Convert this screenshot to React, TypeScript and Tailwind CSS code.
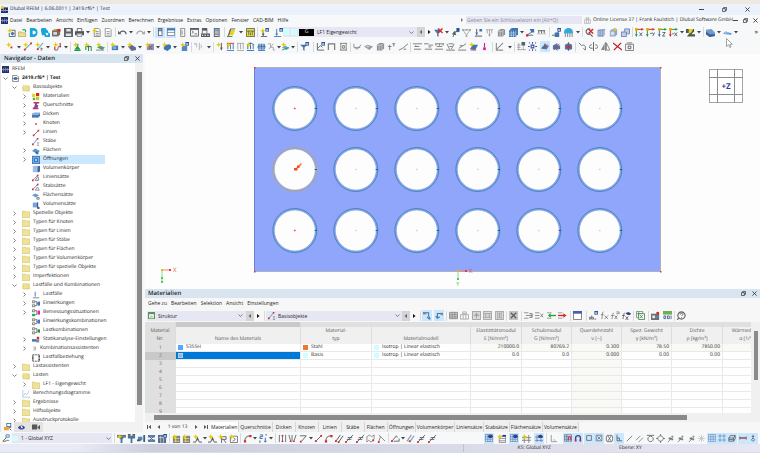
import React from "react";

type Piece = { d: string; fill?: string; stroke?: string; w?: number };

const F = (fill: string, d: string): Piece => ({ fill, d });
const L = (stroke: string, d: string, w = 1): Piece => ({ stroke, d, w });

const BLUE = "#3f74b4";
const SKY = "#7fb0e0";
const INK = "#5a5e64";
const GREY = "#a3a5a8";
const RED = "#d62a2a";
const GREEN = "#1d9a4b";

const star = F("#e6cf00", "M3 0l.9 2.100L6 3l-2.100.9L3 6l-.9-2.100L0 3l2.100-.9z");
const tab = [F("#2f4f9a", "M6 0h4v4H6z"), F("#dfe8f7", "M6.800 1.500h2.400v1.500H6.800z")];
const sheet = (c: string) => [F("#fff", "M2.500 1h5l1 1.500V9.500h-6z"), L(c, "M2.500 .5h5l1.500 1.500v7.500h-6.500zM4 4h3.500M4 6h3.500M4 8h3.500", 0.9)];
const axes = (letter: Piece, a: string, b: string) => [
  L(a, "M1.500 1.500V9", 1.1), L(b, "M1.500 1.500H8.500", 1.1),
  F("#e8b000", "M0 0h3v3H0z"), F(a, "M0 7h3L1.500 10z"), F(b, "M7 0v3l3-1.500z"), letter,
];
const support = (c: string) => [L(c, "M1 2h8M2.500 2v4M5 2v6M7.500 2v4", 1), F(c, "M3.500 7h3L5 10z")];
const zig = (c: string) => [L(c, "M0 2h10M1 8h8M7 5H2l1.500-1.500", 1)];

const ICONS: Record<string, Piece[]> = {
  newModel: [L(INK, "M3.500 2.500h5.500v7h-6.500v-4"), F(BLUE, "M4 6l2-2 2.500 2L6 8.500z"), star],
  open: [F("#e9dda0", "M0 4h4l1 1h4v5H0z"), L("#b9a656", "M.5 4.500h3l1 1h4v4h-8z", 0.7), L(GREEN, "M5 2.500c2-2 4 0 3.500 2", 1.2)],
  cloud: [F("#13a5dd", "M1 0h4a4.500 5 0 0 1 0 10H1z"), F("#fff", "M4 3h1.500a2 2 0 0 1 0 4H4z")],
  cloudSync: [F("#13a5dd", "M0 3a3 3 0 0 1 6-1 2.500 2.500 0 0 1 2 3l2 1v4H4V8H1z"), F("#fff", "M5 5l3 1v2H6z")],
  block: [F("#77726d", "M0 3l3-2h6v6L7 9.500H0z"), F("#dba53a", "M3 1h3l-2 2H1z"), F("#ddd", "M1.500 4.500h4v3h-4z"), F(RED, "M6.500 1h3v3h-3z")],
  save: [F("#5f6164", "M0 0h9l1 1v9H0z"), F("#e4e4e4", "M2.500 1h5v3h-5zM2 6h6v3H2z")],
  print: [F("#515356", "M0 3.500h10V8H0z"), L(INK, "M2.500 3.500v-3h5v3"), F("#ececec", "M2 6h6v4H2z"), L(INK, "M2.500 6.500h5v3h-5z", 0.7)],
  copyDoc: [...sheet("#777"), star],
  doc: sheet("#888"),
  undo: [L(INK, "M2 6c1-4 7-3 7 1", 1.3), F(INK, "M0 3l3.800 4H0z")],
  redo: [L(GREY, "M8 6c-1-4-7-3-7 1", 1.3), F(GREY, "M10 3v4H6.200z")],
  navPanel: [F(INK, "M2.500 0h5.500v10H2.500z"), F("#fff", "M3.500 4h3.500v5H3.500z"), F(SKY, "M3.500 1h3.500v2H3.500z")],
  tablePanel: [F("#fff", "M.5 1h9v8h-9z"), L(INK, "M.5 1h9v8.500h-9zM.5 5.500h9", 0.8), F(BLUE, "M0 .5h10v2.500H0z")],
  panel: [L("#777", "M3 .5h4.500v9H3zM4.500 2.500v5", 0.9)],
  console: [L(INK, "M.5 1h9v8h-9z", 1), L(INK, "M2 3l2 1.500L2 6M5 6.500h3", 0.9), F(INK, "M0 0h10v2H0z")],
  script: [F(INK, "M1 0h6v3H1z"), L(INK, "M1.500 3v3M6.500 3v3", 0.9), F(INK, "M0 6h10v4H0z"), F("#fff", "M1 7.500h1.500v1H1zM4 7.500h1.500v1H4zM7 7.500h1.500v1H7z")],
  calculator: [F("#65676b", "M2 0h6.500v10H2z"), F(SKY, "M3 1h4.500v2H3z"), F("#fff", "M3 4h4.500v1H3zM3 6h4.500v1H3zM3 8h4.500v1H3z")],
  section: [F("#e7d51a", "M2 8l2-6h5L7 8z"), L(INK, "M0 9.500h6M2 8l2-7h5M1 9.500L4 1", 1)],
  yellowGrid: [F("#e7dd3a", "M0 0h10v10H0z"), L(INK, "M.5.5h9v9h-9zM3 3v5M7 3v5M1 3.500h8M5 5v3", 0.9)],
  newCase: [L(INK, "M3.500 3v6M1 9.500h7", 1), F(INK, "M2 6h3L3.500 9z"), star, ...tab],
  caseLoad: [L(BLUE, "M3 1v7M0 9.500h8", 1), F(BLUE, "M1.500 6h3L3 9z"), ...tab],
  filterOff: [F(BLUE, "M0 2h8L5 6v4L3.500 9V6z"), L(RED, "M4.500 .5l5 5M9.500 .5l-5 5", 1.6)],
  nodeBlue: [L(GREEN, "M2 10L5 4h4", 1.1), F(INK, "M1 7l3-4 2 5z"), F("#2f4f9a", "M6 0h3.500v4H6z")],
  filterDots: [L(GREY, "M1 2h8L5 8z", 1), F(GREY, "M0 1h2v2H0zM4 1h2v2H4zM8 1h2v2H8zM4 8h2v2H4z")],
  beamDown: [L(INK, "M1 9h8M3 1v7", 1.1), F(BLUE, "M1.500 5h3L3 8zM6 1h3v3H6z")],
  supportGrey: support(GREY),
  cube: [F("#8d9196", "M1 3l3-2h5v6L6.500 9.500H1z"), L("#e5e6e8", "M1 3.500h5.500V9M6.500 3.500L9 1M3.500 3.500V9", 0.7)],
  meshBlue: [F(BLUE, "M0 3l3-3h7v7L7 10H0z"), L("#dce8f5", "M0 5.500h7M0 8h7M2.500 3v7M5 3v7M7.500 3v6", 0.6)],
  loadRed: [L(INK, "M1 8l6-4M1 8h7", 1), F(RED, "M0 7h2.500v2.500H0z"), F(BLUE, "M4 1h5v4H6z")],
  supportRow: [L(INK, "M1 3h8M2 3v3M5 3v3M8 3v3", 1), F(GREY, "M0 6h3v1H0zM3.500 6h3v1h-3zM7 6h3v1H7z")],
  results: [L(INK, "M0 8h4l4-5", 1), F(BLUE, "M3 5h5v5H3z"), ...tab],
  dome: [F("#35a7d8", "M0 5a5 5 0 0 1 10 0v1H0z"), L(INK, "M1.500 6v4M4 6v4M6.500 6v4M9 6v4", 0.8)],
  findOff: [L(INK, "M6 6.500a3 3 0 1 1 0-5M5 6l3.500 3.500", 1.2), L(RED, "M4 1l5 5M9 1L4 6", 1.6)],
  boxBlue: [F("#aebfe2", "M1 2.500L3 1h6v6.500L7 9.500H1z"), L("#6c80ad", "M1 2.500h5.500V9.500M6.500 2.500L9 1M1 2.500v6.500h6M3.500 3v6", 0.7)],
  boxNew: [F("#8fa5cf", "M1 3l2-1.500h6V7L7 9.500H1z"), F("#d9dfeb", "M2 4h4v4H2z"), F("#e5c629", "M5 0h3v3H5z")],
  boxCopy: [F("#c4cfe6", "M0 4h6v6H0zM4 1h6v5H4z"), L("#5870a5", "M.5 4.500h5.500v5H.5zM4 4V1h5.500v5.500H6", 0.8)],
  axisX: axes(L(INK, "M5 5l3 4M8 5L5 9", 1), GREEN, RED),
  axisY: axes(L(INK, "M4.500 6h2M7 5l1 2M9.500 5L7.500 9", 1), GREEN, RED),
  axisZ: axes(L(INK, "M5 5h3L5 9h3", 1), BLUE, GREEN),
  axisNX: axes(L(INK, "M3.500 6.500h2M6 5l3 4M9 5L6 9", 1), RED, GREEN),
  render: [F("#505a44", "M0 1h9v3L6 7h4v2.500H1l3-4H0z"), F("#e6d321", "M3 1l5 0-2 4-3 1z")],
  solid: [F("#6f9bcf", "M0 2l6-1 4 4v4L4 10 0 7z"), F("#3a6197", "M0 4l4 3h6v2L4 10 0 7z")],
  plate: [F("#5c93cf", "M0 6l3-2 7 2-1 1.500-6-.5z"), F("#9cc2e8", "M1 6l2-2 4 2z")],
  nodeNew: [star, F(RED, "M5 5h2v2H5z")],
  lineNew: [L(INK, "M2 8.500L9 1.500"), F(RED, "M1 7.500h2v2H1zM8 .5h2v2H8z"), star],
  memberNew: [L(SKY, "M3 8L9 1", 1.4), F(RED, "M2 7h2v2H2z"), L(INK, "M7 6v4M6 7.500h3", 0.7), star],
  arcNew: [L(RED, "M2 5v4M8 1v5", 1.3), L(INK, "M2 9h3l1-4h3", 0.9), star],
  supportNew: [F(GREEN, "M5 4l3.500 4.500h-7zM1.500 9h7v1h-7z"), F(INK, "M4 2h2v2H4z"), star],
  hingeNew: [L(GREEN, "M2 9V5h6M5 5v5M8 5v5", 1.2), F(INK, "M4 4h2v2H4z"), star],
  slabNew: [F("#4c9f7d", "M1 6l3-2 6 2-3 3z"), L(INK, "M0 9h9", 0.8), star],
  surfNew: [F(BLUE, "M2 4h7v5H2z"), F(SKY, "M3 5h4v3H3z"), star],
  shellNew: [F("#4c77ab", "M1 5l4-2 5 3v3L5 10z"), L(RED, "M3 4l5 5", 1), star],
  openingNew: [F("#8199bd", "M2 2h8v7H2z"), L(RED, "M4 4l4 4M8 4L4 8", 1), star],
  solidNew: [F(BLUE, "M2 4l6-1.500L10 4v3L6 10 2 8z"), star],
  groupNew: [F("#5687c2", "M2 4h6v6H2z"), ...tab, star],
  ghost: [L("#b5b6b8", "M3 2v4M6 1v8M8 3v4", 1), F("#c9c9cb", "M0 1h3v2H0z")],
  forceNew: [L(INK, "M6 1v8", 1.1), F(INK, "M4.500 6h3L6 9.500z"), star],
  loadA: [L(BLUE, "M1 9.500h8M2 2v6M5 2v6M8 2v6", 1), L(RED, "M1 1.500h8", 1), star],
  loadB: [L(GREY, "M1 9.500h8M2 2v6M5 2v6M8 2v6M1 1.500h8", 1)],
  loadC: [L(BLUE, "M1 9.500h8M2 3v5M5 1v7M8 3v5M1 3l4-2 4 2", 1.1), star],
  loadD: [F("#8fb7dd", "M2 2l6 0 2 3-2 4H2L0 6z"), L(BLUE, "M1 9.500h8M2 2v6M5 2v6M8 2v6", 1), L(INK, "M1 5h8", 0.7)],
  deform: [L(GREY, "M1 2h3v4h3v3h2M2 8l5-6", 1)],
  wizard: [F("#6aa1d8", "M1 6l4-2 4 3-3 2z"), L(GREEN, "M1 9l8-3", 0.9), star],
  filterBox: [F(BLUE, "M0 3h8L5 6v4L3.500 9V6z"), ...tab],
  graph: [L(INK, "M1.500 1v8H9M2 7l3-3 2 2", 1), ...tab],
  frame: [L("#777", "M1.500 9V2h7v7", 1.3)],
  frameFull: [L("#777", "M1 1.500h8M1 9h8M2 2v7M8 2v7M4 4h2v3H4z", 1)],
  vee: [L("#888", "M1 2v4l4 2 4-5M2 6h6", 1)],
  layer: [F("#999b9e", "M0 5l4-2 6 2-4 4z"), F("#d3d4d6", "M2 5l2-1 2 1-1 1z")],
  dim: [L("#777", "M3 3v6M1 5h4M6 2h3M7.500 1v4", 1)],
  slope: [L("#777", "M0 9l4-2 6-5M5 8h3", 1)],
  zigA: zig("#777"),
  zigB: [L("#777", "M0 2h5M5 3.500h5M1 8h8M5 5.500h3", 1)],
  zigC: [L("#777", "M0 2h10M2 5h6M0 8h9M1 2v2M5 2v2M9 2v2", 1)],
  zigD: [L("#777", "M0 9h10M1 2l3 6M9 2L6 8M3 2h5M4 5h3", 1)],
  zigE: [L("#777", "M0 9h9M1 7l8-5M2 4h3", 1)],
  resNew: [F(BLUE, "M1 8l3-5h6L7 9z"), star, L(RED, "M2 9h6", 0.8)],
  pin: [L("#d0208c", "M5 1v5", 1.2), F("#e11aa0", "M3.500 6h3v3h-3z")],
  tools: [L("#8b8d90", "M1.500 1v8H9M2 8l7-7", 1.2)],
  gridSmall: [L(GREY, "M0 3.500h4M0 6h4M0 8.500h10M2 1v8M7 5v4", 1), F(INK, "M5 0h4v4H5z")],
  snapNode: [L("#3b4fa0", "M1 1h1M8 1h1M1 9h1M8 9h1M5 0v2M5 8v2M0 5h2M8 5h2", 1.2), L("#3b4fa0", "M3.500 3.500h3v3h-3z", 1.2)],
  planeXY: [F("#4f77ad", "M0 7l3-4h7L7 8z"), L(RED, "M2 7l6-5", 1), F(INK, "M4 1h2v3H4z")],
  planeXZ: [F("#4f77ad", "M1 4l5-3v3h3v4H6v2L4 8H1z"), L(RED, "M2 9l6-7", 1)],
  planeYZ: [F("#4f77ad", "M1 3l4-2 4 2v5L5 9 1 8z"), F(RED, "M3 4h4v3H3z"), L(INK, "M5 0v10", 0.8)],
  rotA: [L("#777", "M1 1l3 3M4 4c4-2 5 2 4 5M6 7l2 2", 1.1)],
  rotB: [L("#666", "M5 0v10M3 3C-1 4-1 7 4 7M7 3c4 1 4 4 0 4", 1.1)],
  mirror: [F("#85888b", "M4 1v8H0z"), L("#666", "M6 1v8h4zM5 0v10", 0.8)],
  crossRed: [L("#c01f1f", "M0 1l10 8M9 1L1 9", 1.4)],
  settingsBox: [L("#777", "M.5 2.500h9v7h-9zM2 1h6", 1), L("#666", "M3.500 4.500h3v3h-3z", 1.1)],
  member: [L(INK, "M2 8L8 2", 1), F(RED, "M1 7h2v2H1zM7 1h2v2H7z")],
  memberT: [L(SKY, "M1.500 7.500L6.500 1.500", 1.3), F(RED, "M0 7h2v2H0zM6 0h2v2H6z"), L("#777", "M6 6h3M7.500 6v3.500M6 9.500h3", 0.7)],
  material: [F("#e6d81e", "M0 1h4v4H0z"), F(RED, "M5 0h4v4H5z"), F("#52b432", "M1 6h3v3H1z"), F("#c8cf18", "M5 5h4v4H5z")],
  profile: [F("#c32f6b", "M2 0h7v2H6.500L5 7h3v2H1V7h1.500L4 2H2z"), F("#3a5fb4", "M5 3l3 1-1 3H4z")],
  thickness: [F("#86b0dd", "M0 3l3-1h7v4L8 8H0z"), F("#4979b3", "M0 5h8V8H0zM8 5l2-2v3L8 8z")],
  point: [F(RED, "M4 4h2v2H4z")],
  surface: [F("#5b93cf", "M0 5l4-3 6 3-4 3z"), F("#3c6ba5", "M4 6h4v3H5z")],
  opening: [F("#3b78b9", "M0 0h10v10H0z"), F("#75ace2", "M1 1h8v8H1z"), F("#3b78b9", "M2.500 2.500h5v5h-5z"), F("#fff", "M4 4h2v2H4z")],
  solidTree: [F("#9fbce2", "M1 1h7v8H1z"), F("#3c66ab", "M7 2l3-1v7L7 9.500z")],
  lineSet: [L(INK, "M1 8l7-7M4 8l3-4M4 8h4v-4", 0.9), F(RED, "M0 7h2v2H0zM6 1h2v2H6z")],
  memberSet: [L("#5b88c4", "M1 8l7-7", 1.2), L(INK, "M4 9l3-4 2 4z", 0.8), F(RED, "M0 7h2v2H0zM6 1h2v2H6z")],
  surfSet: [F("#6d9ad0", "M0 4l4-2 5 2-4 3z"), L(INK, "M6 7h3v2H6z", 0.9)],
  solidSet: [F("#78a2d7", "M1 2h6v6H1z"), L("#31559a", "M7 2v6h2v1.500H7z", 1.2)],
  folder: [F("#efe29b", "M0 1h4l1 1h5v8H0z"), L("#d3c375", "M.5 1.500h3l1 1h5v7h-9z", 0.6)],
  folderOpen: [F("#f7f0bd", "M1 2h8v7H1z"), F("#ece093", "M1 3l8-1 1 2v5H1L0 5z"), L("#d3c375", "M1.500 1.500h3v1h4v6h-7z", 0.6)],
  loadCase: [L("#4a79c0", "M4 1v6", 1.2), L(INK, "M1 8.500h8", 0.9)],
  action: [L("#555", "M.5 1h3v2.500h-3zM.5 6h3v2.500h-3zM4 2h2v5H4M6 4.500h2", 0.9), F("#3e76c7", "M7 2h3v5H7z")],
  design: [L("#555", "M.5 1h3v2.500h-3zM4 2h2v5H4", 0.9), F("#25b34d", "M0 6h4v3H0z"), F("#e31fc2", "M7 2h3v5H7z")],
  combo: [L("#555", "M.5 1h3v2.500h-3zM.5 6h3v2.500h-3zM4 2h2v5H4", 0.9), F("#1f9440", "M7 3h3v4H7z")],
  analysis: [F("#3f6db6", "M0 4h5v3H0z"), F(RED, "M6 1h3v3H6z"), F("#7d8da7", "M5 4h4v4H5z")],
  assist: [L("#888", "M2 2h5v6H2M4 5h3", 1.2)],
  relation: [L("#444", "M3 1H1v8h2M7 1h2v8H7M2 4l-1.500 1L2 6M8 3h2M8 7h2M4 1h2M4 9h2", 1.1)],
  chart: [L("#a8c2dc", "M1 0v9h9M2 7l2-3 2 2 3-5", 1)],
  rfem: [F("#22306f", "M0 0h10v10H0z"), F("#e8e8f4", "M0 5h10v.8H0zM2 3v5h.6V3zM5 2v6h.6V2zM8 3v5h.6V3z")],
  logo: [F("#22306f", "M0 2h10v8H0z"), F("#efce3a", "M0 0h4v4H0z"), F("#fff", "M0 6h10v.8H0zM3 4v4h.6V4zM6 4v4h.6V4z")],
  modelDoc: [L("#44566b", "M1 .5h6l2 2v7H1z", 1), F("#47719f", "M3 3h4v4H3z"), L(INK, "M0 5h10", 0.9)],
  navData: [F("#3a6bab", "M3 0h6v6H3z"), F("#fff", "M4 1h4v3H4z"), F("#f0a22a", "M0 5h6v4H0z"), L(RED, "M7 7l2 2", 1.2)],
  eye: [F("#34428f", "M0 5c2-4 8-4 10 0-2 4-8 4-10 0z"), F("#fff", "M3.500 4a1.700 1.700 0 1 1 2 2.500z")],
  camera: [F("#55575a", "M0 2h6.500v6H0zM7 5l3-2.500v6L7 6z")],
  csys: [L(RED, "M1 9h4", 1.2), L(GREEN, "M1 9l4-4", 1.2), L(BLUE, "M5 5V1h4v3H5M5 8h4", 1)],
  visA: [F(BLUE, "M2 3h6L6 6v4H4V6z"), F("#6f7882", "M0 1h10v3H0z"), star],
  visB: [F("#4c7299", "M1 2h8v3H6v5H4V5H1z"), F(INK, "M1 0h3v2H1zM6 0h3v2H6z")],
  visC: [F("#4f8ac6", "M1 3h5v4H1z"), F("#485a70", "M7 1h2v8H7zM0 6h4v2H0z")],
  visD: [F("#5885b8", "M1 1h8v3H1zM1 6h8v3H1z"), L(INK, "M2 2l6 6M8 2L2 8", 1)],
  visE: [F("#576f8b", "M0 1h9v9H0z"), L("#dbe7f3", "M1 4h8M3 2v8M6 2v8", 0.7), ...tab],
  gridNew: [F("#85817b", "M1 2h8v8H1z"), L("#f3e98a", "M2 5h6M2 8h6M4 4v5", 0.8), star],
  gridLine: [L("#77736d", "M1.500 2.500h8v7h-8zM5 4l2 2-3 2", 1), star],
  wedge: [L(INK, "M0 9h3l2-5 2 5h3M5 4v3", 1.1), star],
  flagNew: [L(INK, "M4 3v7M4 3h5v3H4M6 6l3 4", 1), star],
  arcRed: [L(INK, "M2 8c0-4 2-6 6-6", 1.1), F(RED, "M1 7h2.500v2.500H1zM7 1h2.500v2.500H7z")],
  numbers: [L(BLUE, "M1 1h3v2H1v2h3M7 4v5M5.500 7.500L7 9l1.500-1.500", 1.1), L(INK, "M7 1h2M1 7v3", 1)],
  bars: [L("#666", "M1.500 1v8M5 1v8M8.500 1v8", 1), F(RED, "M4 1h2v1.500H4zM4 7.500h2V9H4z")],
  vbars: [L("#666", "M1 1l2 7M4.500 1v7M9 1L6.500 8", 1), F(RED, "M2 7.500h2V9H2zM5.500 7.500h2V9h-2z")],
  bend: [L(INK, "M1 2h7L3 8", 1), F(RED, "M1 7.500h2V9.500H1z")],
  hatch: [L(INK, "M1 8l5-7M4 9l5-7", 1.1), F(RED, "M0 7h2v2H0zM3 8h2v2H3z")],
  lineX: [L(INK, "M1 9l8-8M3 4h5M2 6h5", 1), F(RED, "M0 8h2v2H0z")],
  polyGrey: [L("#888", "M1 3l3-2 2 2 3-2v4L6 9 3 7 1 9z", 1), F(RED, "M7 6h2v2H7z")],
  snapEnd: [L("#888", "M2 1l4 4 3 3M4 3L2 8", 1.1), F(RED, "M1 8h2v2H1z")],
  magnetLine: [L(INK, "M1 8l5-6 1 2M3 8h6V5", 1), F(RED, "M0 7h2v2H0z")],
  parallelR: [L("#7e93b3", "M1 8l5-7M4 9l5-7", 1.2), F(RED, "M3 7h2v2H3z")],
  tableEye: [L("#5b77a5", "M.5.5h9v9h-9zM.5 3.500h9M.5 6.500h9M3.500.5v9M6.500.5v9", 0.8), F("#2b3f8a", "M4 2c2-2 5-1 6 1-1 2-4 3-6 1z")],
  tableStar: [L("#777", "M2.500 2.500h7v7h-7zM2.500 5h7M2.500 7.500h7", 0.8), star, F("#2b3f8a", "M6 1h4v2H6z")],
  railNew: [L("#777", "M2.500 1v9M7.500 1v9M0 4h10M0 7h10", 0.9), star],
  railEye: [L("#5b77a5", "M2.500 1v9M7.500 1v9M0 4h10M0 8h10", 0.9), F("#2b3f8a", "M4 2c2-2 5-1 6 1-1 2-4 3-6 1z")],
  corner: [L("#9b9da0", "M2.500 1v7.500H9", 1.1), L("#bbb", "M4.500 6.500h2v2", 0.8)],
  gridMagnet: [L("#4b5c80", "M.5 1h9v8h-9zM.5 3.500h9M.5 6.500h9M3.500 1v8", 0.8), L(RED, "M5.500 8V5a1.500 1.500 0 0 1 3 0v3", 1.3)],
  magnet: [L("#2e4b94", "M2 9V5a3 3 0 0 1 6 0v4", 1.7), F(RED, "M1 7h2v2.500H1zM7 7h2v2.500H7z")],
  sqr: [L("#5e6268", "M2 2h6v6H2z", 1)],
  sqrX: [L("#5e6268", "M1.500 1.500h7v7h-7zM3 3l4 4M7 3L3 7", 0.9)],
  sqrI: [L("#5e6268", "M2 1.500h6M2 8.500h6M3 2l4 6M7 2L3 8M1.500 2v6M8.500 2v6", 0.9)],
  ortho: [L("#51607a", "M2.500 1v7.500H9M2.500 5h3v3", 1.1)],
  diag: [L("#777", "M2 8l6-6", 1)],
  para: [L("#777", "M1 7l5-5M4 9l5-5", 0.9)],
  tangent: [L("#666", "M1 1.500h8", 1), L("#666", "M5 2.500a3 3 0 1 0 .1 0", 1)],
  circle: [L("#666", "M5 2a3 3 0 1 0 .1 0M5 0v2M5 8v2M0 5h2M8 5h2", 0.9)],
  spot: [L("#777", "M2 9l6-6", 0.9), F("#777", "M3 4h3v2H3zM6 5h2v2H6zM6 2h2v1H6z")],
  stars: [L("#b4b4b4", "M2 2l6 6M8 2L2 8M5 1v8M1 5h8", 0.7)],
  grid: [L("#5b83b8", "M.5.5h9v9h-9zM.5 3.500h9M.5 6.500h9M3.500.5v9M6.500.5v9", 0.7)],
  gridOpen: [L("#5b83b8", "M2.500 0v10M7.500 0v10M0 2.500h10M0 7.500h10", 0.8)],
  stack: [L("#4b5057", "M1 5l2-3h6L7 5zM1 5v4h6V5M7 9l2-3V2M1 7h6", 0.9)],
  strap: [L("#a22b3b", "M1 5h8", 1.6), L(INK, "M1 3v4M9 3v4", 1)],
  anchor: [L("#51607a", "M5 1v5M3.500 3h3", 1), L("#51607a", "M5 5.500a1.700 1.700 0 1 0 .1 0", 1)],
  structure: [F("#5d8f6d", "M0 0h10v10H0z"), F("#e9f3e0", "M1.500 3h7v6h-7z"), F("#a9cf8f", "M2 8l3-3 3 3z")],
  pickA: [L(BLUE, "M1 1h6v4l2 4M5 6l3 3", 1.3), F("#7b8794", "M0 0h4v3H0z")],
  pickB: [L(BLUE, "M8 2H3v5M1 5l2 3 3-2", 1.3), F("#7b8794", "M7 1h3v3H7z")],
  sheetGrid: [F("#c9cbcd", "M0 1h10v8H0z"), L("#85878a", "M.5 1.500h9v7h-9zM0 4h10M0 6.500h10M3.500 1v8M6.500 1v8", 0.8)],
  sheetTop: [L("#a1a3a6", "M.5 4h9v5h-9zM3.500 4v5M6.500 4v5M3 1h4v2H3z", 0.9)],
  sheetArrow: [F("#d8d9db", "M0 0h10v10H0z"), L("#999", "M.5.5h9v9h-9zM5 2v6M2 5h6M3 3.500h4", 0.9)],
  sheetRow: [F("#d8d9db", "M0 0h10v10H0z"), L("#999", "M.5.5h9v9h-9zM.5 3h9M.5 7h9M3 3v4M7 3v4", 0.8)],
  sheetCol: [F("#d8d9db", "M0 0h10v10H0z"), L("#999", "M.5.5h9v9h-9zM3 .5v9M7 .5v9M5 2v6M4 3h2M4 7h2", 0.8)],
  del: [F("#c1c3c5", "M0 0h10v10H0z"), L("#5c5e61", "M2 2l6 6M8 2L2 8", 1.4)],
  rowIn: [L("#888", "M0 2h5M0 8h5M2 5h7", 1), L("#666", "M6 3h3v4H6", 1)],
  rowDel: [L("#888", "M0 2h5M0 8h5M0 5h5M6 3l3 4M9 3L6 7", 1)],
  rowGreen: [L("#888", "M0 2h5M0 8h5", 0.9), L("#1fa33c", "M3 5h7", 1.5), F("#1fa33c", "M4 2.500v5L1 5z")],
  rowRed: [L("#888", "M0 2h5M0 8h5", 0.9), L("#e02020", "M0 5h7", 1.5), F("#e02020", "M6 2.500v5L9.500 5z")],
  window: [F("#fff", "M0 0h10v10H0z"), L("#777", "M.5.5h9v9h-9z", 1), F("#4560a9", "M0 0h10v3H0z")],
  abTab: [L(INK, "M0 7h2v2H0zM3 5v4h2V7H3M6 9h2", 0.9), ...tab],
  fx: [L("#777", "M4 1C2 1 3 4 2 9M1 4h3M5 5l4 4M9 5L5 9", 0.9)],
  fxTab: [L("#777", "M3 2C2 2 2 5 1 9M0 5h3M4 5l3 4M7 5L4 9M6 1h3v2H6", 0.9)],
  fxEye: [L("#555", "M3 2C2 2 2 5 1 9M0 5h3M4 6l3 4M7 6l-3 4", 0.9), F("#2b3f8a", "M4 2.500c2-2 5-1 6 .5-1 2-4 2-6-.5z")],
  excel: [L("#5f8f63", "M.5.5h7v7h-7zM.5 3h7M3 .5v7", 0.9), F("#fff", "M3 3h6.500v6.500H3z"), L("#3f7a45", "M3 3h6.500v6.500H3zM4.500 4.500l3 3.500M7.500 4.500L4.500 8", 0.9)],
  modelIn: [F("#6b6e72", "M0 3h9v7H0z"), F("#e9e9ea", "M1.500 5h3v3h-3z"), F("#5084c3", "M5 5h3v3H5z"), F(RED, "M6 1h3v3H6z")],
  decimals: [F("#6fae55", "M0 0h10v4H0z"), L("#38568d", "M1 5.500h2v3H1zM5 5.500h2v3H5zM9 5v4", 0.9)],
  help: [L(INK, "M5 1a4 4 0 1 1-.1 0M2 8L0 10", 1.2), L(INK, "M3.500 4c0-2 3-2 3 0L5 5.500M5 7v.8", 1)],
};

function Icon({ n, s = "size-[10px]" }: { n: string; s?: string }) {
  return (
    <svg viewBox="0 0 10 10" className={`${s} shrink-0`} fill="none" aria-hidden="true">
      {ICONS[n].map((p, i) => (
        <path key={i} d={p.d} fill={p.fill ?? "none"} stroke={p.stroke} strokeWidth={p.w} />
      ))}
    </svg>
  );
}

function Caret() {
  return (
    <svg viewBox="0 0 4 4" className="size-[4px] shrink-0" aria-hidden="true">
      <path d="M0 1h4L2 3.500z" fill="#444" />
    </svg>
  );
}

function Sep() {
  return (
    <span className="flex w-[4px] shrink-0 justify-center">
      <span className="h-[10px] w-px bg-[#d9d9d9]" />
    </span>
  );
}

/* "v" is the drop-down arrow, a leading "*" marks a switched-on tool */
function Tools({ items, className }: { items: string; className: string }) {
  return (
    <div className={`flex shrink-0 items-center justify-between ${className}`}>
      {items.split(" ").map((t, i) => {
        if (t === "v") return <Caret key={i} />;
        const on = t.startsWith("*");
        const name = on ? t.slice(1) : t;
        return (
          <button
            key={i}
            type="button"
            aria-label={name}
            aria-pressed={on}
            className={`flex h-[11px] w-[10px] shrink-0 items-center justify-center ${on ? "bg-[#cce6fb]" : ""}`}
          >
            <Icon n={name} s={on ? "size-[8px]" : "size-[9px]"} />
          </button>
        );
      })}
    </div>
  );
}

function Chevron({ down = true }: { down?: boolean }) {
  return (
    <svg viewBox="0 0 5 5" className="size-[5px] shrink-0" fill="none" stroke="#666" strokeWidth="0.800" aria-hidden="true">
      <path d={down ? "M.5 1.500l2 2 2-2" : "M1.500.5l2 2-2 2"} />
    </svg>
  );
}

function Step({ dir }: { dir: "prev" | "next" }) {
  const prev = dir === "prev";
  return (
    <button
      type="button"
      aria-label={prev ? "Zurück" : "Weiter"}
      className={`flex h-[10px] w-[8px] shrink-0 items-center justify-center ${prev ? "bg-[#d4d4d6]" : ""}`}
    >
      <svg viewBox="0 0 4 4" className="size-[4px]" aria-hidden="true">
        <path d={prev ? "M3 0v4L.5 2z" : "M1 0v4l2.500-2z"} fill={prev ? "#666" : "#111"} />
      </svg>
    </button>
  );
}

function Combo({ label, value, className, children }: { label: string; value: string; className: string; children?: React.ReactNode }) {
  return (
    <label className={`flex h-[10px] shrink-0 items-center bg-[#e6e7f3] ${className}`}>
      {children}
      <select aria-label={label} className="h-[8px] min-w-0 flex-1 appearance-none bg-transparent p-0 leading-[8px]">
        <option>{value}</option>
      </select>
      <Chevron />
    </label>
  );
}

function Restore({ s = "size-[5px]" }: { s?: string }) {
  return (
    <svg viewBox="0 0 6 6" className={s} fill="none" stroke="#333" strokeWidth="0.900" aria-hidden="true">
      <path d="M.5 2h3.500v3.500H.5zM2 2V.5h3.500V4H4" />
    </svg>
  );
}

function Close({ s = "size-[5px]" }: { s?: string }) {
  return (
    <svg viewBox="0 0 6 6" className={s} fill="none" stroke="#333" strokeWidth="1" aria-hidden="true">
      <path d="M.5.5l5 5M5.500.5l-5 5" />
    </svg>
  );
}

function Minimize() {
  return <span className="block h-px w-[5px] bg-[#444]" />;
}

function PanelTitle({ children }: { children: string }) {
  return (
    <div className="flex h-[9px] shrink-0 items-center gap-[6px] bg-[#d8e5f1] pr-[3px] pl-[3px]">
      <h2 className="flex-1 text-[6px] leading-[9px] font-semibold">{children}</h2>
      <button type="button" aria-label="Abdocken"><Restore /></button>
      <button type="button" aria-label="Schließen"><Close /></button>
    </div>
  );
}

type Node = { t: string; i?: string; open?: boolean; arrow?: boolean; on?: boolean; kids?: Node[] };

const leaf = (t: string, i: string, arrow = true, on = false): Node => ({ t, i, arrow, on });
const folder = (t: string): Node => ({ t, i: "folder", arrow: true });

const TREE: Node[] = [
  {
    t: "Basisobjekte", i: "folderOpen", open: true, arrow: true, kids: [
      leaf("Materialien", "material"), leaf("Querschnitte", "profile"), leaf("Dicken", "thickness"),
      leaf("Knoten", "point"), leaf("Linien", "member"), leaf("Stäbe", "memberT", false),
      leaf("Flächen", "surface"), leaf("Öffnungen", "opening", true, true), leaf("Volumenkörper", "solidTree", false),
      leaf("Liniensätze", "lineSet", false), leaf("Stabsätze", "memberSet", false),
      leaf("Flächensätze", "surfSet", false), leaf("Volumensätze", "solidSet", false),
    ],
  },
  folder("Spezielle Objekte"), folder("Typen für Knoten"), folder("Typen für Linien"), folder("Typen für Stäbe"),
  folder("Typen für Flächen"), folder("Typen für Volumenkörper"), folder("Typen für spezielle Objekte"), folder("Imperfektionen"),
  {
    t: "Lastfälle und Kombinationen", i: "folderOpen", open: true, arrow: true, kids: [
      leaf("Lastfälle", "loadCase"), leaf("Einwirkungen", "action"), leaf("Bemessungssituationen", "design"),
      leaf("Einwirkungskombinationen", "action", false), leaf("Lastkombinationen", "combo", false),
      leaf("Statikanalyse-Einstellungen", "analysis"), leaf("Kombinationsassistenten", "assist"),
      leaf("Lastfallbeziehung", "relation", false),
    ],
  },
  folder("Lastassistenten"),
  { t: "Lasten", i: "folderOpen", open: true, arrow: true, kids: [leaf("LF1 - Eigengewicht", "folder")] },
  leaf("Berechnungsdiagramme", "chart", false),
  folder("Ergebnisse"), folder("Hilfsobjekte"), folder("Ausdruckprotokolle"),
];

function TreeRow({ n }: { n: Node }) {
  const small = n.i === "assist";
  return (
    <li>
      <div className="flex h-[9px] items-center">
        <span className="flex w-[10px] shrink-0 items-center">{n.arrow && <Chevron down={!!n.open} />}</span>
        <span className={`flex h-[9px] items-center gap-[3px] whitespace-nowrap ${n.on ? "w-[73px] bg-[#cce8ff]" : ""}`}>
          <Icon n={n.i!} s={small ? "size-[5px]" : "size-[8px]"} />
          <span>{n.t}</span>
        </span>
      </div>
      {n.kids && (
        <ul className="pl-[10px] not-last:pb-px">
          {n.kids.map((k) => <TreeRow key={k.t} n={k} />)}
        </ul>
      )}
    </li>
  );
}

function Navigator() {
  return (
    <aside className="flex w-[143px] shrink-0 flex-col border-l border-[#e4e4e4] bg-[#f2f2f2]">
      <PanelTitle>Navigator - Daten</PanelTitle>
      <div className="flex min-h-0 flex-1">
        <div className="min-w-0 flex-1 overflow-hidden bg-white pt-[2px]">
          <div className="flex h-[9px] items-center gap-[3px] pl-px"><Icon n="rfem" s="size-[7px]" />RFEM</div>
          <div className="flex h-[9px] items-center pl-[2px] font-bold">
            <span className="w-[9px]"><Chevron /></span>
            <Icon n="modelDoc" s="size-[7px]" />
            <span className="pl-[3px]">2419.rf6* | Test</span>
          </div>
          <ul className="pl-[11px]">
            {TREE.map((n) => <TreeRow key={n.t} n={n} />)}
          </ul>
        </div>
        <div className="flex w-[8px] shrink-0 flex-col items-center pt-[9px] pb-[17px]">
          <div className="w-[5px] flex-1 bg-[#8a8a8a]" />
        </div>
      </div>
      <div className="flex h-[10px] shrink-0">
        <button type="button" aria-label="Daten" className="flex w-[13px] items-center justify-center bg-[#f8f8f8]"><Icon n="navData" s="size-[8px]" /></button>
        <button type="button" aria-label="Zeigen" className="flex w-[15px] items-center justify-center bg-[#e3e3e3]"><Icon n="eye" s="size-[7px]" /></button>
        <button type="button" aria-label="Ansichten" className="flex w-[14px] items-center justify-center bg-[#e3e3e3]"><Icon n="camera" s="size-[8px]" /></button>
      </div>
    </aside>
  );
}

function Model() {
  const cols = [0, 1, 2, 3, 4, 5];
  const rows = [0, 1, 2];
  return (
    <svg viewBox="0 1 615 235" className="min-h-0 w-full flex-1 bg-[#fdfdfd]" role="img" aria-label="Platte mit Öffnungen">
      <rect x="109.500" y="14.500" width="406" height="204" fill="#90a6fa" stroke="#b0b1bd" />
      <path d="M109.500 14.500v204" stroke="#6f80c8" />
      {[109, 515].map((x) => [14, 218].map((y) => <rect key={`${x}-${y}`} x={x} y={y} width="1.500" height="1.500" fill="#f02b3c" />))}
      {rows.map((r) =>
        cols.map((c) => {
          const x = 149.800 + c * 61;
          const y = 55.500 + r * 61;
          const picked = r === 1 && c === 0;
          return (
            <g key={`${r}-${c}`}>
              <circle cx={x} cy={y} r="22" fill="#86a5f2" stroke={picked ? "#c2a366" : "#3480b0"} strokeWidth="0.800" />
              <circle cx={x} cy={y} r="20.500" fill="#fdfdfd" stroke={picked ? "#a6aacb" : "#7d90cc"} strokeWidth="0.600" />
              <rect x={x + 19.800} y={y - 0.500} width="2.400" height="1" fill="#1d5f93" />
              {!picked && <rect x={x - 0.700} y={y - 0.700} width="1.400" height="1.400" fill={c === 0 ? "#f02020" : "#c9c9c9"} />}
            </g>
          );
        }),
      )}
      <path d="M150.500 116.500l6-6" stroke="#f5691c" strokeWidth="1.300" />
      <path d="M149 115h3.500v2.500H149zM152 112.500h2.500v2.500H152z" fill="#f5501a" />
      {[[17, 217], [313, 218]].map(([x, y], i) => (
        <g key={i} fontSize="6" fontFamily="Open Sans, sans-serif">
          <path d={`M${x} ${y}h9`} stroke="#f58080" />
          <path d={`M${x} ${y}v${i === 0 ? 12 : 8}`} stroke="#86dd86" />
          <rect x={x - 1} y={y - 1} width="2" height="2" fill="#d0c020" />
          <rect x={x + 7} y={y - 1} width="2" height="2" fill="#e83a3a" />
          <rect x={x - 1} y={y + 7} width="2" height="2" fill="#4cc85a" />
          <text x={x + 11} y={y + 2} fill="#e84545">X</text>
          {i === 0 ? <rect x={x - 1} y={y + 11} width="2" height="2" fill="#4cc85a" /> : <text x={x - 2} y={y + 15} fill="#3fbf50">Y</text>}
        </g>
      ))}
      <g stroke="#8c8c8c" fill="none">
        <rect x="564.500" y="16.500" width="33" height="33" fill="#fff" stroke="#a5a5a5" />
        <path d="M572.500 16v34M589.500 16v34M564 24.500h34M564 41.500h34" />
      </g>
      <text x="581" y="36" textAnchor="middle" fontSize="8" fontWeight="700" fontFamily="Open Sans, sans-serif" fill="#3c3c96">+Z</text>
    </svg>
  );
}

const HEAD = [
  ["Material", "Nr."], ["", "Name des Materials"], ["Material-", "typ"], ["", "Materialmodell"],
  ["Elastizitätsmodul", "E [N/mm²]"], ["Schubmodul", "G [N/mm²]"], ["Querdehnzahl", "ν [--]"],
  ["Spez. Gewicht", "γ [kN/m³]"], ["Dichte", "ρ [kg/m³]"], ["Wärmedehnz.", "α [1/°C]"],
];

const DATA = [
  { name: "S355H", type: "Stahl", color: "bg-[#ec7a34]", nums: ["210000.0", "80769.2", "0.300", "78.50", "7850.00", ""] },
  { name: "", type: "Basis", color: "bg-[#ccffff]", nums: ["0.0", "0.0", "0.000", "0.00", "0.00", ""] },
];

const swatch = "inline-block size-[5px] align-middle";
const cell = "h-[8px] overflow-hidden border-r border-b border-[#e9e9e9] p-0 px-[2px] leading-[7px] whitespace-nowrap";

function MaterialTable() {
  return (
    <table className="w-[629px] table-fixed border-separate border-spacing-0 bg-white">
      <colgroup>
        <col className="w-[31px]" /><col className="w-[125px]" /><col className="w-[71px]" /><col className="w-[99px]" />
        <col className="w-[51px]" /><col className="w-[50px]" /><col className="w-[50px]" /><col className="w-[50px]" />
        <col className="w-[51px]" /><col className="w-[51px]" />
      </colgroup>
      <thead className="text-[#555]">
        <tr>
          {HEAD.map((h, i) => (
            <th key={i} className={`h-[22px] border-r border-[#dcdcdc] p-0 align-top font-normal ${i === 0 ? "bg-[#e0e0e0]" : "bg-[#f0f0f0]"}`}>
              <div className={`h-[5px] ${i === 1 ? "bg-[#c9c9c9]" : "bg-[#e0e0e0]"}`} />
              <div className="h-[8px] leading-[8px] whitespace-nowrap">{h[0]}</div>
              <div className="h-[8px] leading-[8px] whitespace-nowrap">{h[1]}</div>
            </th>
          ))}
        </tr>
      </thead>
      <tbody>
        {[1, 2, 3, 4, 5, 6, 7, 8, 9].map((nr) => {
          const d = DATA[nr - 1];
          return (
            <tr key={nr}>
              <th scope="row" className={`h-[8px] p-0 leading-[8px] font-normal text-[#666] ${nr === 2 ? "bg-[#c9c9c9]" : "bg-[#e0e0e0]"}`}>{nr}</th>
              <td className={`${cell} ${nr === 2 ? "bg-[#0078d7]" : ""}`}>
                {nr === 1 && <span className="flex items-center gap-[3px]"><span className={`${swatch} bg-[#54a8ff]`} />{d.name}</span>}
                {nr === 2 && <span className="flex items-center"><span className={`${swatch} border border-[#b9cee2] bg-[#8fb3d4]`} /></span>}
              </td>
              <td className={cell}>
                {d && <span className="flex items-center gap-[3px]"><span className={`${swatch} ${d.color}`} />{d.type}</span>}
              </td>
              <td className={cell}>
                {d && <span className="flex items-center gap-[3px]"><span className={`${swatch} bg-[#ccffff]`} />Isotrop | Linear elastisch</span>}
              </td>
              {[0, 1, 2, 3, 4, 5].map((k) => (
                <td key={k} className={`${cell} text-right ${k === 2 || nr === 1 ? "bg-[#f9f9f5]" : ""}`}>{d?.nums[k]}</td>
              ))}
            </tr>
          );
        })}
      </tbody>
    </table>
  );
}

const TABS = ["Materialien", "Querschnitte", "Dicken", "Knoten", "Linien", "Stäbe", "Flächen", "Öffnungen", "Volumenkörper", "Liniensätze", "Stabsätze", "Flächensätze", "Volumensätze"];

function Pager({ d, label }: { d: string; label: string }) {
  return (
    <button type="button" aria-label={label} className="flex w-[9px] items-center justify-center">
      <svg viewBox="0 0 5 4" className="h-[4px] w-[5px]" aria-hidden="true"><path d={d} fill="#555" /></svg>
    </button>
  );
}

function Materials() {
  return (
    <section className="flex shrink-0 flex-col bg-[#f7f7f7]">
      <PanelTitle>Materialien</PanelTitle>
      <nav className="flex h-[11px] items-center gap-[4px] pl-[3px]">
        {["Gehe zu", "Bearbeiten", "Selektion", "Ansicht", "Einstellungen"].map((m) => <button key={m} type="button">{m}</button>)}
      </nav>
      <div className="flex h-[13px] items-center pl-[2px]">
        <Combo label="Tabellengruppe" value="Struktur" className="w-[99px] gap-[3px] pr-[3px] pl-px"><Icon n="structure" s="size-[7px]" /></Combo>
        <Step dir="prev" /><Step dir="next" />
        <Sep />
        <Combo label="Objektgruppe" value="Basisobjekte" className="w-[136px] gap-[2px] pr-[2px] pl-[2px]"><Icon n="memberT" s="size-[8px]" /></Combo>
        <Step dir="prev" /><Step dir="next" />
        <Sep />
        <Tools items="*pickA *pickB" className="w-[22px]" />
        <Sep />
        <Tools items="sheetGrid sheetTop sheetArrow sheetRow sheetCol" className="w-[56px]" />
        <Sep />
        <Tools items="del" className="w-[11px]" />
        <Sep />
        <Tools items="rowIn rowDel rowGreen rowRed" className="w-[45px]" />
        <Sep />
        <Tools items="window" className="w-[12px]" />
        <Sep />
        <Tools items="abTab fx fxTab fxEye" className="w-[43px]" />
        <Sep />
        <Tools items="excel" className="w-[11px]" />
        <Sep />
        <Tools items="modelIn decimals" className="w-[22px]" />
        <Sep />
        <Tools items="help" className="w-[10px]" />
      </div>
      <div className="flex h-[91px]">
        <div className="min-w-0 flex-1 overflow-hidden"><MaterialTable /></div>
        <div className="flex w-[9px] shrink-0 flex-col items-center bg-[#f0f0f0] pt-[9px]">
          <div className="h-[49px] w-[4px] bg-[#8a8a8a]" />
        </div>
      </div>
      <div className="flex h-[9px] items-center bg-[#f0f0f0] pl-[9px]">
        <div className="h-[5px] w-[88%] bg-[#8a8a8a]" />
      </div>
      <div className="flex h-[10px] items-stretch">
        <Pager label="Erste" d="M0 0h1v4H0zM4 0v4L1.500 2z" />
        <Pager label="Vorige" d="M4 0v4L1.500 2z" />
        <span className="w-[29px] text-center leading-[10px]">1 von 13</span>
        <Pager label="Nächste" d="M1 0v4l2.500-2z" />
        <Pager label="Letzte" d="M1 0v4l2.500-2zM4 0h1v4H4z" />
        {TABS.map((t, i) => (
          <button key={t} type="button" className={`min-w-[23px] border-r border-[#d5d5d5] px-px ${i === 0 ? "bg-white" : "bg-[#f0f0f0]"}`}>{t}</button>
        ))}
      </div>
    </section>
  );
}

const MENU = ["Datei", "Bearbeiten", "Ansicht", "Einfügen", "Zuordnen", "Berechnen", "Ergebnisse", "Extras", "Optionen", "Fenster", "CAD-BIM", "Hilfe"];

export default function App() {
  return (
    <div className="relative flex h-screen flex-col overflow-hidden bg-[#f7f8f9] font-['Open_Sans','Noto_Sans',sans-serif] text-[5px] leading-[9px] text-[#262626] [text-rendering:geometricPrecision]">
      <div className="h-[4px] shrink-0 bg-[#ebe9e1]" />
      <header className="flex h-[11px] shrink-0 items-center gap-[2px] bg-[#ebf2fb] pr-[10px] pl-px">
        <Icon n="logo" s="size-[7px]" />
        <h1 className="flex-1">Dlubal RFEM | 6.06.0011 | 2419.rf6* | Test</h1>
        <div className="flex items-center gap-[18px]">
          <button type="button" aria-label="Minimieren"><Minimize /></button>
          <button type="button" aria-label="Wiederherstellen"><Restore /></button>
          <button type="button" aria-label="Schließen"><Close /></button>
        </div>
      </header>
      <nav className="flex h-[10px] shrink-0 items-center pr-[2px] pl-px">
        <Icon n="rfem" s="size-[7px]" />
        <div className="flex flex-1 gap-[4px] pl-[2px]">
          {MENU.map((m) => <button key={m} type="button">{m}</button>)}
        </div>
        <svg viewBox="0 0 4 4" className="mr-[2px] size-[4px]" aria-hidden="true"><path d="M1 0v4l2-2z" fill="#777" /></svg>
        <input aria-label="Suche" placeholder="Geben Sie ein Schlüsselwort ein (Alt+Q)" className="h-[8px] w-[116px] shrink-0 bg-[#e6e7f3] px-px placeholder:text-[#8a8b96]" />
        <span className="flex w-[151px] shrink-0 items-center gap-[2px] pl-[2px] whitespace-nowrap"><Icon n="sheetTop" s="size-[7px]" />Online License 37 | Frank Faulstich | Dlubal Software GmbH</span>
        <div className="flex shrink-0 items-center gap-[5px]">
          <button type="button" aria-label="Dokument minimieren"><Minimize /></button>
          <button type="button" aria-label="Dokument wiederherstellen"><Restore /></button>
          <button type="button" aria-label="Dokument schließen"><Close /></button>
        </div>
      </nav>

      <div className="flex h-[14px] shrink-0 items-center pr-[2px] pl-[6px]">
        <Tools items="newModel open cloud cloudSync block save print v copyDoc doc" className="w-[107px]" />
        <Sep />
        <Tools items="undo v redo v" className="w-[34px]" />
        <Sep />
        <Tools items="*navPanel *tablePanel panel console script calculator" className="w-[67px]" />
        <Sep />
        <Tools items="section v yellowGrid" className="w-[29px]" />
        <Sep />
        <Tools items="newCase caseLoad" className="w-[24px]" />
        <Combo label="Lastfall" value="LF1   Eigengewicht" className="w-[134px] gap-[2px] pr-[3px]">
          <span className="size-[6px] bg-[#ccffff]" />
          <span className="size-[6px] bg-[#ccffff]" />
          <span className="mr-px h-[7px] w-[15px] bg-black text-center leading-[7px] text-white">G</span>
        </Combo>
        <Step dir="prev" /><Step dir="next" />
        <Tools items="filterOff v nodeBlue filterDots beamDown supportGrey cube meshBlue v loadRed supportRow" className="w-[114px]" />
        <Sep />
        <Tools items="results dome v" className="w-[29px]" />
        <Sep />
        <Tools items="findOff boxBlue boxNew boxCopy" className="w-[46px]" />
        <Sep />
        <Tools items="axisX axisY axisZ axisNX v render v" className="w-[67px]" />
        <Sep />
        <Tools items="solid v plate v" className="w-[33px]" />
        <span className="flex-1 text-right text-[7px]">»</span>
      </div>

      <div className="flex h-[15px] shrink-0 items-center pl-[5px]">
        <Tools items="nodeNew v lineNew memberNew v arcNew v" className="w-[63px]" />
        <Sep />
        <Tools items="supportNew hingeNew slabNew" className="w-[33px]" />
        <Sep />
        <Tools items="surfNew v shellNew v openingNew v solidNew v groupNew" className="w-[80px]" />
        <Sep />
        <Tools items="ghost v" className="w-[18px]" />
        <Sep />
        <Tools items="forceNew loadA loadB loadC loadD deform v wizard v" className="w-[80px]" />
        <Sep />
        <Tools items="filterBox" className="w-[12px]" />
        <Sep />
        <Tools items="graph frame frameFull" className="w-[33px]" />
        <Sep />
        <Tools items="vee layer cube dim slope" className="w-[56px]" />
        <Sep />
        <Tools items="zigA zigB zigC zigD zigE resNew pin" className="w-[78px]" />
        <Sep />
        <Tools items="tools v" className="w-[18px]" />
        <Sep />
        <Tools items="gridSmall snapNode *planeXY planeXZ planeYZ" className="w-[57px]" />
        <Sep />
        <Tools items="rotA rotB mirror crossRed settingsBox" className="w-[57px]" />
      </div>

      <div className="flex min-h-0 flex-1 gap-[2px]">
        <Navigator />
        <main className="flex min-w-0 flex-1 flex-col">
          <Model />
          <Materials />
        </main>
      </div>

      <div className="flex h-[12px] shrink-0 items-center pr-[2px] pl-[2px]">
        <Icon n="csys" s="size-[8px]" />
        <Combo label="Koordinatensystem" value="1 - Global XYZ" className="ml-[2px] w-[100px] gap-[3px] pr-px pl-px"><span className="size-[5px] bg-[#ccffff]" /></Combo>
        <Sep />
        <Tools items="visA visB visC visD visE" className="w-[51px]" />
        <Sep />
        <Tools items="gridNew gridNew wedge v wedge flagNew gridLine" className="w-[67px]" />
        <Sep />
        <Tools items="arcRed v numbers v" className="w-[31px]" />
        <Sep />
        <Tools items="bars vbars bend v member arcRed hatch lineX lineX polyGrey snapEnd" className="w-[109px]" />
        <Sep />
        <Tools items="magnetLine v parallelR lineX lineX" className="w-[47px]" />
        <span className="flex-1" />
        <Tools items="*tableEye tableStar *tableEye railNew *railEye" className="w-[60px]" />
        <Sep />
        <Tools items="corner" className="w-[15px]" />
        <Tools items="*gridMagnet *magnet *sqr *sqrX sqrI *ortho diag para tangent circle spot spot spot stars *grid *gridOpen *stack *strap *anchor" className="w-[195px]" />
      </div>

      <footer className="flex h-[8px] shrink-0 items-center bg-linear-to-r from-[#e8eaf6] from-10% via-[#cdcfdd] via-20% to-[#e6e7f2] leading-[8px]">
        <span className="w-[61%] border-r border-[#c0c2d0]">&nbsp;</span>
        <span className="w-[19%] pl-[54px]">KS: Global XYZ</span>
        <span className="pl-[11px]">Ebene: XY</span>
      </footer>
      <div className="h-px shrink-0 bg-[#dcdcdc]" />

      <svg viewBox="0 0 7 10" className="absolute top-[38px] left-[726px] h-[10px] w-[7px]" aria-hidden="true">
        <path d="M.5.5v8l2-1.800 1.300 2.800 1.200-.6-1.200-2.600H6.300z" fill="#fff" stroke="#666" strokeWidth="0.600" />
      </svg>
    </div>
  );
}
